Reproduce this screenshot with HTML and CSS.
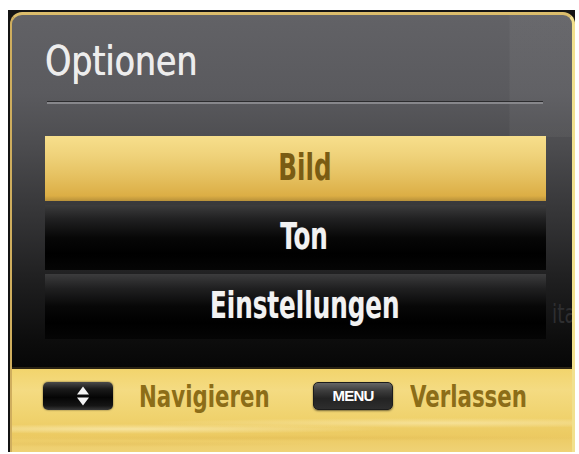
FILE: index.html
```html
<!DOCTYPE html>
<html lang="de">
<head>
<meta charset="utf-8">
<title>Optionen</title>
<link rel="stylesheet" href="styles.css">
</head>
<body>
<div class="screen">
  <div class="panel">
    <div class="head">
      <h1 class="title"><span class="squeeze">Optionen</span></h1>
      <div class="rule"></div>
    </div>
    <ul class="menu">
      <li class="item active"><span class="squeeze">Bild</span></li>
      <li class="item"><span class="squeeze">Ton</span></li>
      <li class="item"><span class="squeeze">Einstellungen</span></li>
    </ul>
    <span class="ghost">ita</span>
    <div class="footer">
      <div class="hint hint-nav">
        <span class="key key-arrows">
          <svg width="70" height="28" viewBox="0 0 70 28" aria-hidden="true">
            <path d="M40 4.5 L46 12.5 H34 Z" fill="#f4f4f4"/>
            <path d="M40 23.5 L46 15.5 H34 Z" fill="#f4f4f4"/>
          </svg>
        </span>
        <span class="label">Navigieren</span>
      </div>
      <div class="hint">
        <span class="key key-menu">MENU</span>
        <span class="label">Verlassen</span>
      </div>
    </div>
  </div>
</div>
</body>
</html>
```

FILE: styles.css
```css
html, body {
  margin: 0;
  padding: 0;
  background: #ffffff;
}

body {
  width: 579px;
  height: 454px;
  overflow: hidden;
  font-family: "DejaVu Sans Condensed", "DejaVu Sans", sans-serif;
}

.screen {
  margin: 10px 4px 0 8px;
  width: 567px;
  height: 442px;
  background: #141414;
  padding: 2px 0 0 2px;
  box-sizing: border-box;
}

.panel {
  position: relative;
  height: 440px;
  box-sizing: border-box;
  border-top: 3px solid #dcbd6c;
  border-left: 2px solid #cfae5e;
  border-right: 3px solid #f1e08e;
  border-radius: 12px 12px 0 0;
  display: flex;
  flex-direction: column;
  overflow: hidden;
  background:
    linear-gradient(90deg, rgba(255,255,255,0) 0, rgba(255,255,255,0) 497px, rgba(255,255,255,0.045) 498px, rgba(255,255,255,0.045) 100%) 0 0 / 100% 122px no-repeat,
    linear-gradient(180deg, #626266 0%, #5a5a5e 18%, #4c4c4f 30%, #363638 45%, #202021 60%, #0c0c0c 75%, #000000 88%, #000000 100%);
}

.head {
  padding-top: 26px;
}

.title {
  margin: 0 0 0 33px;
  font-size: 41px;
  line-height: 40px;
  font-weight: normal;
  color: #ededed;
  text-shadow: 0.5px 0 0 rgba(237,237,237,0.9), 0 0 1px rgba(255,255,255,0.4);
}

.title .squeeze {
  display: inline-block;
  transform: scaleX(0.9);
  transform-origin: left center;
}

.rule {
  margin: 20px 29px 0 35px;
  height: 2px;
  border-top: 1px solid #2c2c2e;
  background: #87878b;
}

.menu {
  list-style: none;
  margin: 32px 26px 0 33px;
  padding: 0;
  display: flex;
  flex-direction: column;
  gap: 4px;
}

.item {
  height: 65px;
  display: flex;
  align-items: center;
  justify-content: center;
  padding-left: 18px;
  padding-bottom: 3px;
  box-sizing: border-box;
  font-size: 38px;
  font-weight: bold;
  color: #f2f2f2;
  background: linear-gradient(180deg, #3c3c3d 0%, #202021 22%, #070707 50%, #000000 75%, #050505 100%);
}

.item .squeeze {
  display: inline-block;
  transform: scaleX(0.72);
  text-shadow: 0 0 1px rgba(255,255,255,0.35);
}

.item.active {
  color: #7a5c13;
  background: linear-gradient(180deg, #f7df8c 0%, #efd27a 30%, #e6c262 60%, #dcae45 92%, #b8913a 100%);
}

.item.active .squeeze {
  text-shadow: none;
}

.ghost {
  position: absolute;
  right: 0;
  top: 284px;
  font-size: 26px;
  line-height: 30px;
  color: #2e2e30;
  transform: scaleX(0.8);
  transform-origin: right center;
  margin-right: -4px;
}

.footer {
  margin-top: auto;
  height: 85px;
  box-sizing: border-box;
  border-top: 2px solid #2a2314;
  padding: 13px 0 0 33px;
  display: flex;
  align-items: flex-start;
  background:
    radial-gradient(ellipse 260px 5px at 120px 60px, rgba(255,246,205,0.55), rgba(255,246,205,0) 100%),
    radial-gradient(ellipse 300px 5px at 430px 54px, rgba(255,246,205,0.45), rgba(255,246,205,0) 100%),
    radial-gradient(ellipse 340px 3px at 300px 69px, rgba(200,150,40,0.16), rgba(200,150,40,0) 100%),
    radial-gradient(ellipse 220px 3px at 90px 75px, rgba(200,150,40,0.14), rgba(200,150,40,0) 100%),
    linear-gradient(180deg, #f2d46c 0%, #f4db82 25%, #f0d36f 55%, #ecca62 80%, #efd276 100%);
  margin-left: -2px;
  margin-right: -3px;
}

.hint {
  display: flex;
  align-items: center;
  height: 28px;
}

.hint-nav {
  flex: 0 0 270px;
}

.key {
  display: flex;
  align-items: center;
  justify-content: center;
  height: 28px;
  border-radius: 5px;
  box-sizing: border-box;
}

.key-arrows {
  width: 70px;
  background: linear-gradient(180deg, #4a4a4a 0%, #1a1a1a 25%, #050505 55%, #151515 85%, #3a3a3a 100%);
  box-shadow: 0 0 2px rgba(0,0,0,0.6);
}

.key-arrows svg {
  display: block;
}

.key-menu {
  width: 80px;
  border: 1px solid #1c1c1c;
  background: linear-gradient(180deg, #666666 0%, #3c3c3c 30%, #232323 60%, #2e2e2e 100%);
  color: #ffffff;
  font-family: "Liberation Sans", Arial, sans-serif;
  font-weight: bold;
  font-size: 15px;
  letter-spacing: -0.8px;
  padding-bottom: 1px;
  box-shadow: 0 1px 2px rgba(0,0,0,0.5);
}

.label {
  display: inline-block;
  font-size: 30px;
  font-weight: bold;
  color: #8c6d18;
  transform: scaleX(0.79);
  transform-origin: left center;
  white-space: nowrap;
}

.hint .label {
  margin-left: 17px;
}

.hint-nav .label {
  margin-left: 26px;
}
```
